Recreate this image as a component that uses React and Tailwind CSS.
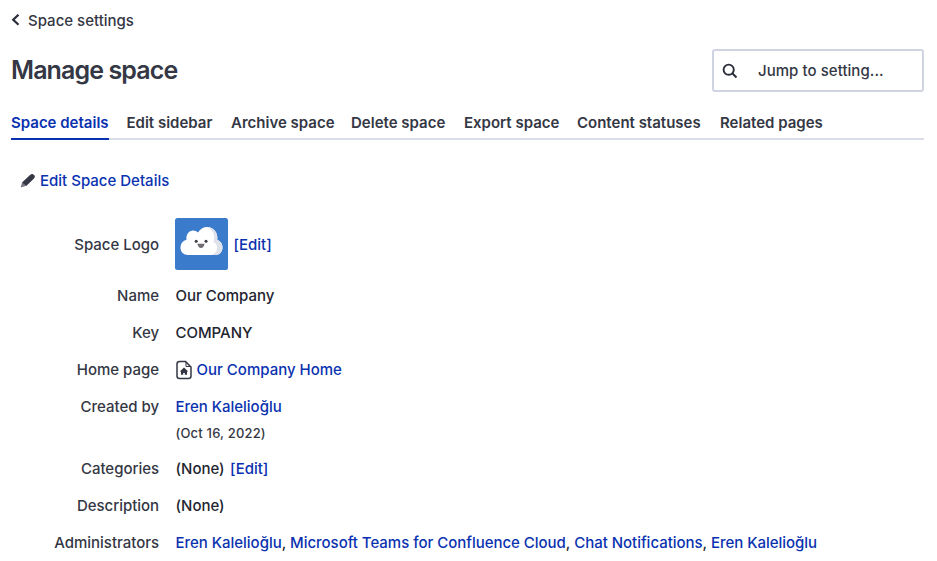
import React from "react";

const tabs = [
  ["Edit sidebar", "w-[86.5px]"],
  ["Archive space", "w-[102px]"],
  ["Delete space", "w-[95px]"],
  ["Export space", "w-[95px]"],
  ["Content statuses", "w-[125px]"],
  ["Related pages", "w-[104px]"],
];

function Row({ label, children, className = "h-[37px]" }) {
  return (
    <div className={`flex items-center whitespace-nowrap ${className}`}>
      <div className="w-[159px] text-right">{label}</div>
      <div className="ml-[16.5px] flex items-center text-[#22252f]">{children}</div>
    </div>
  );
}

function Link({ children, className = "" }) {
  return <a className={`text-[#0a32b0] ${className}`}>{children}</a>;
}

function CloudLogo() {
  return (
    <svg width="53" height="52" viewBox="0 0 53 52" className="-ml-[1px] shrink-0">
      <rect width="53" height="52" rx="2.5" fill="#3a7bcb" />
      <path d="M13 37C8.700 37 5.500 34 5.500 29.800C5.500 25.500 8 22.500 11.500 21.700C10.800 16.500 14 12.500 18 12.500C20 12.500 21.700 13.200 23 14.500C25 11 28.300 9 32 9C38.500 9 43.200 14.500 42.300 22C45.500 23 47.500 26 47.500 29.500C47.500 34 44.500 37 40.500 37Z" fill="#fff" />
      <path d="M32 9C38.500 9 43.200 14.500 42.300 22C45.500 23 47.500 26 47.500 29.500C47.500 34 44.500 37 40.500 37H36C40 36 42.500 33 42 29C41.700 26.500 40.500 25 38.500 24C40.500 17 38 11.500 32 9Z" fill="#dfe2ea" />
      <circle cx="21.200" cy="23.300" r="1.500" fill="#3d3b43" />
      <circle cx="31" cy="23.300" r="1.500" fill="#3d3b43" />
      <path d="M22.500 25.800H29.500C29.300 28.500 27.900 30 26 30C24.100 30 22.700 28.500 22.500 25.800Z" fill="#706c70" />
    </svg>
  );
}

export default function App() {
  return (
    <div className="h-[561px] w-[937px] overflow-hidden bg-white font-['Inter',sans-serif] text-[15px] leading-5 font-[450] text-[#343744]">
      <div className="flex h-[40px] items-center pl-[11px]">
        <svg width="9" height="13" viewBox="0 0 9 13" fill="none" stroke="#2b2e3a" strokeWidth="2.200">
          <path d="M7.500 .7L2.200 5.700L7.500 10.800" />
        </svg>
        <span className="ml-[8px] pt-[2px]">Space settings</span>
      </div>
      <div className="flex h-[61px] items-center justify-between pr-[13px] pl-[11px]">
        <h1 className="pb-[2px] text-[25px] leading-8 font-semibold tracking-[-0.9px]">Manage space</h1>
        <div className="flex h-[43px] w-[212px] items-center rounded-[3px] border-2 border-[#cfd3e2] pl-[8px]">
          <svg width="16" height="16" viewBox="0 0 16 16" fill="none" stroke="#2b2e3a" strokeWidth="1.900">
            <circle cx="6.700" cy="6.700" r="5.100" />
            <path d="M10.500 10.500L14.500 14.500" />
          </svg>
          <span className="ml-[20px] tracking-[0.05px]">Jump to setting...</span>
        </div>
      </div>
      <nav className="mr-[13px] ml-[11px] flex h-[39px] items-center gap-[18px] border-b-2 border-[#d9dde8] font-semibold whitespace-nowrap">
        <a className="mb-[-2px] flex h-[39px] w-[97.5px] items-center border-b-2 border-[#0a32b0] pt-[6px] text-[#0a32b0]">Space details</a>
        {tabs.map(([name, width]) => (
          <a key={name} className={`${width} pt-[6px]`}>{name}</a>
        ))}
      </nav>
      <div className="mt-[31px] flex h-[20px] items-center pl-[20px]">
        <svg width="16" height="16" viewBox="0 0 16 16">
          <path d="M2 9.500L9.800 2.200Q11.500 .6 13 1.200L14.600 2.600Q15.500 4 14 5.500L6.500 12.800L3.200 12.800Z" fill="#343744" />
          <path d="M2 9.500L.7 14.500L6.500 12.800Z" fill="#747783" />
        </svg>
        <Link className="ml-[4px]">Edit Space Details</Link>
      </div>
      <main className="mt-[27px] tracking-[-0.025px]">
        <Row label={<span className="relative top-px">Space Logo</span>} className="mb-[7.500px] h-[52px]">
          <CloudLogo />
          <Link className="ml-[6px] pt-[2px]">[Edit]</Link>
        </Row>
        <Row label="Name">Our Company</Row>
        <Row label="Key">COMPANY</Row>
        <Row label="Home page">
          <svg width="18" height="20" viewBox="0 0 18 20" fill="none" className="-ml-[0.5px]">
            <path d="M4.500 1.500H10.500L16 7V16Q16 18.500 13.500 18.500H4.500Q2 18.500 2 16V4Q2 1.500 4.500 1.500Z" stroke="#343744" strokeWidth="1.500" />
            <path d="M11 1.500V6.500H16" stroke="#343744" strokeWidth="1" />
            <path d="M9 7.500L13.200 11.500H12V14.800H9.800V13H8.200V14.800H6V11.500H4.800Z" fill="#343744" />
          </svg>
          <Link className="ml-[3.500px] tracking-normal">Our Company Home</Link>
        </Row>
        <Row label="Created by"><Link>Eren Kalelioğlu</Link></Row>
        <div className="h-[25px] pl-[175.500px] text-[13px] leading-[15px] tracking-[0.18px]">(Oct 16, 2022)</div>
        <Row label="Categories"><span>(None)</span><Link className="ml-[5.500px]">[Edit]</Link></Row>
        <Row label="Description">(None)</Row>
        <Row label="Administrators">
          <div>
            <Link>Eren Kalelioğlu</Link>, <Link>Microsoft Teams for Confluence Cloud</Link>, <Link>Chat Notifications</Link>, <Link>Eren Kalelioğlu</Link>
          </div>
        </Row>
      </main>
    </div>
  );
}
